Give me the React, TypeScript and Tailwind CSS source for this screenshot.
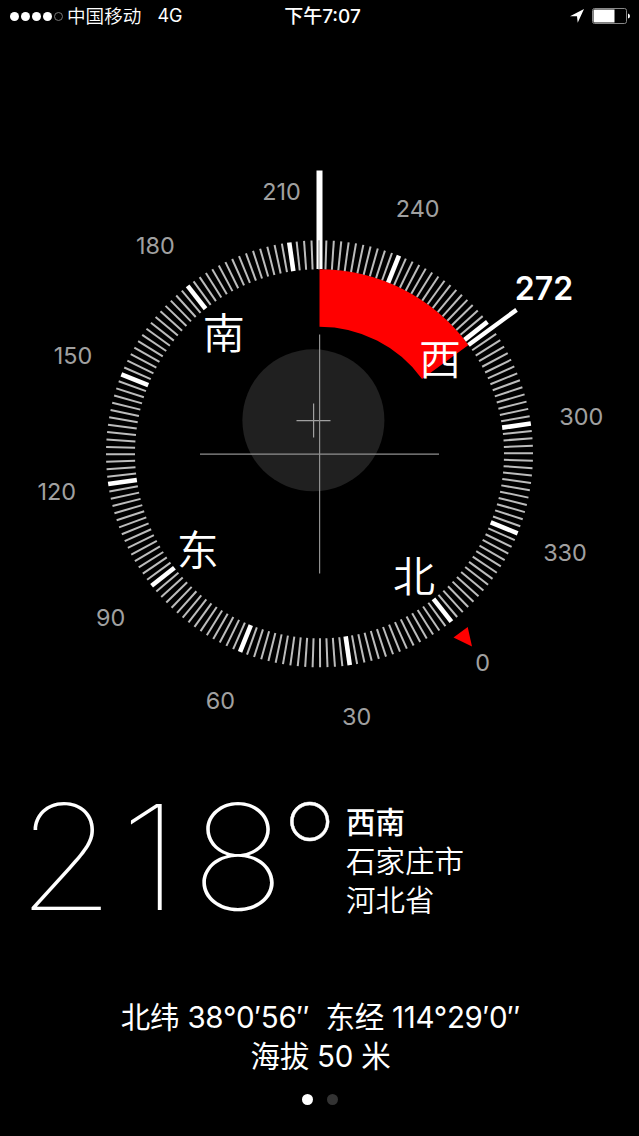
import clsx from "clsx";

const HEADING = 218.15;
const TARGET = 272;

const CX = 319.5;
const CY = 453.8;
const R_OUTER = 213.5;
const R_INNER = 184.5;

const ticks = Array.from({ length: 180 }, (_, i) => i * 2);
const labels = [0, 30, 60, 90, 120, 150, 180, 210, 240, 300, 330];

const cardinals = [
  { deg: 0, label: "北" },
  { deg: 90, label: "东" },
  { deg: 180, label: "南" },
  { deg: 270, label: "西" },
];

function polar(deg: number, r: number) {
  const a = ((deg - HEADING) * Math.PI) / 180;
  return { x: CX + r * Math.sin(a), y: CY - r * Math.cos(a) };
}

function Tick({ deg }: { deg: number }) {
  const from = polar(deg, R_INNER);
  const to = polar(deg, R_OUTER);
  const major = deg % 30 === 0;

  return (
    <line
      x1={from.x}
      y1={from.y}
      x2={to.x}
      y2={to.y}
      stroke={major ? "#fff" : "#bcbcbc"}
      strokeWidth={major ? 4.6 : 2}
    />
  );
}

function Sector() {
  const a = polar(HEADING, R_INNER);
  const b = polar(TARGET, R_INNER);
  const c = polar(TARGET, 127);
  const d = polar(HEADING, 127);

  return (
    <path
      d={`M${a.x} ${a.y}A${R_INNER} ${R_INNER} 0 0 1 ${b.x} ${b.y}L${c.x} ${c.y}A127 127 0 0 0 ${d.x} ${d.y}Z`}
      fill="#f00"
    />
  );
}

function Dial() {
  const markFrom = polar(TARGET, R_INNER);
  const markTo = polar(TARGET, 244);

  return (
    <svg
      viewBox="0 32 639 728"
      className="h-[728px] w-[639px] shrink-0 font-['Inter','Noto_Sans_CJK_SC',sans-serif]"
    >
      <circle cx="313.4" cy="420.3" r="71" fill="#202020" />
      <path d="M296.5 420.6h34M313.6 403.5v34" stroke="#a0a0a0" strokeWidth="1.2" />
      <path d="M200 454.1h239M319.6 334.5v239" stroke="#909090" strokeWidth="1.2" />

      <Sector />
      <rect x="316.5" y="170.5" width="6" height="98.5" fill="#fff" />
      {ticks.map((deg) => (
        <Tick key={deg} deg={deg} />
      ))}
      <line
        x1={markFrom.x}
        y1={markFrom.y}
        x2={markTo.x}
        y2={markTo.y}
        stroke="#fff"
        strokeWidth="4.4"
      />
      <path d="M453.5 637.5L467.7 627L472 646.5Z" fill="#f00" />

      {labels.map((deg) => {
        const p = polar(deg, 265);
        return (
          <text
            key={deg}
            x={p.x - 0.5}
            y={p.y + 8.9}
            textAnchor="middle"
            fontSize="23.4"
            fill="#a0a0a0"
          >
            {deg}
          </text>
        );
      })}
      {cardinals.map(({ deg, label }) => {
        const p = polar(deg, 154);
        return (
          <text
            key={deg}
            x={p.x - 0.7}
            y={p.y + 16.6}
            textAnchor="middle"
            fontSize="42"
            fontWeight="350"
            fill="#fff"
          >
            {label}
          </text>
        );
      })}
      <text x="544" y="300" textAnchor="middle" fontSize="32" fontWeight="600" fill="#fff">
        {TARGET}
      </text>
    </svg>
  );
}

function StatusBar() {
  return (
    <header className="grid h-8 grid-cols-3 items-center pl-2.5 pr-2 text-lg leading-none">
      <div className="flex items-center">
        <div className="flex gap-[2px]">
          {[0, 1, 2, 3, 4].map((i) => (
            <span
              key={i}
              className={clsx(
                "size-[9px] rounded-full",
                i < 4 ? "bg-white" : "border border-[#777]",
              )}
            />
          ))}
        </div>
        <span className="ml-1 whitespace-nowrap text-[18.6px] font-[350]">中国移动</span>
        <span className="ml-4">4G</span>
      </div>
      <div className="pl-1 pt-px text-center text-[19px] font-medium">下午7:07</div>
      <div className="flex items-center justify-end gap-2">
        <svg viewBox="0 0 14 14" className="size-3.5">
          <path d="M0 7.3L14 0L7.7 13.8L7 7.3Z" fill="#fff" />
        </svg>
        <svg viewBox="0 0 39 16" className="h-4 w-[39px]">
          <rect x="0.5" y="0.5" width="34" height="15" rx="2" fill="none" stroke="#888" />
          <path d="M2.5 1.5H22.5V14.5H2.5Q1.5 14.5 1.5 13.5V2.5Q1.5 1.5 2.5 1.5Z" fill="#fff" />
          <path d="M36 5.5Q38 6 38 8T36 10.5Z" fill="#fff" />
        </svg>
      </div>
    </header>
  );
}

function Reading() {
  return (
    <section className="flex h-[180px] items-start pl-[17px] pt-[9px]">
      <div className="flex w-[329px] shrink-0 text-[146px] font-thin leading-[176px]">
        <span className="w-[102px] origin-left scale-x-[1.08]">2</span>
        <span className="w-[72px] origin-left scale-x-[1.15]">1</span>
        <span className="w-[89px] origin-left scale-x-[1.08]">8</span>
        <span className="text-[131px] leading-[165px] [-webkit-text-stroke:0.4px_#fff]">°</span>
      </div>
      <div className="pt-[34px] text-[29.5px] font-[350] leading-[39px]">
        <p className="font-medium">西南</p>
        <p>石家庄市</p>
        <p>河北省</p>
      </div>
    </section>
  );
}

export default function App() {
  return (
    <main className="flex h-[1136px] w-[639px] flex-col overflow-hidden bg-black font-['Inter','Noto_Sans_CJK_SC',sans-serif] text-white">
      <StatusBar />
      <Dial />
      <Reading />
      <section className="mt-[58px] pl-0.5 text-center text-[29.5px] font-[390] leading-[39px] tracking-[-0.25px]">
        <p className="whitespace-pre">北纬 38°0′56″  东经 114°29′0″</p>
        <p>海拔 50 米</p>
      </section>
      <div className="mt-[18px] flex justify-center gap-3.5">
        <span className="size-[11px] rounded-full bg-white" />
        <span className="size-[11px] rounded-full bg-[#333]" />
      </div>
    </main>
  );
}
